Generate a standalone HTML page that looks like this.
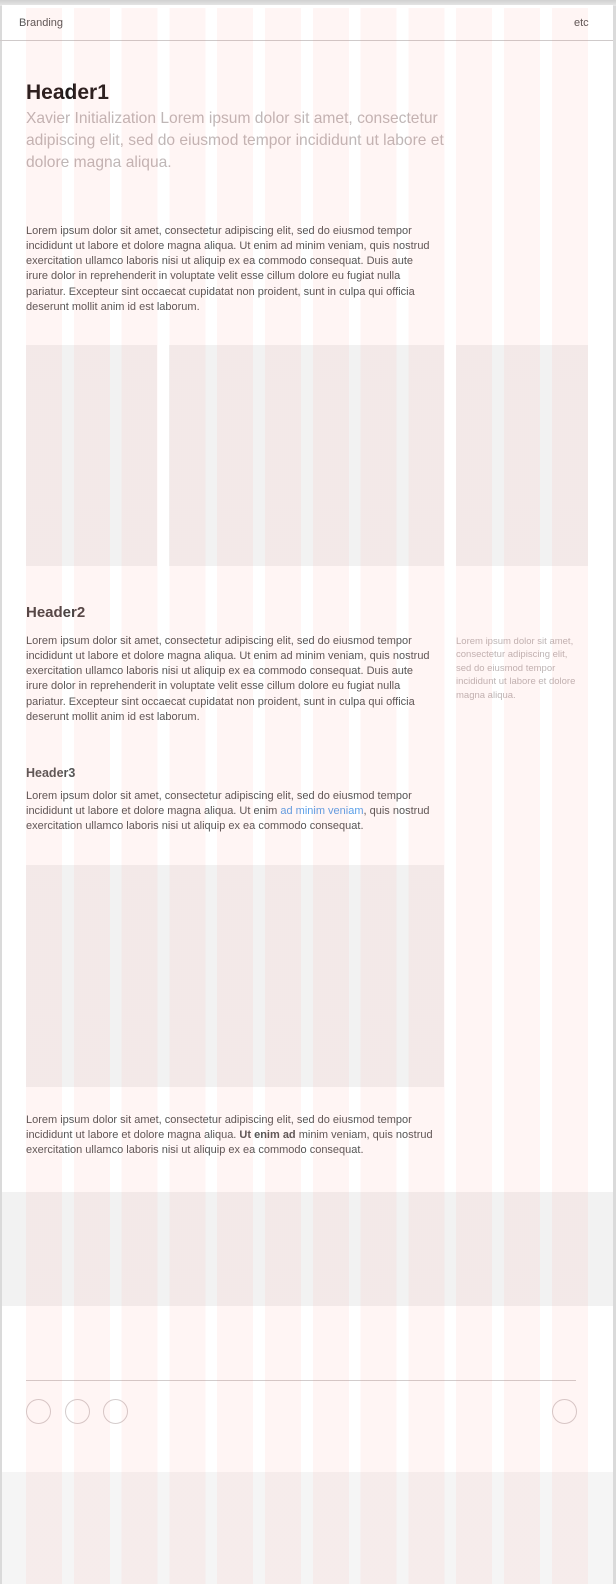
<!DOCTYPE html>
<html><head><meta charset="utf-8">
<style>
html,body{margin:0;padding:0}
body{width:616px;height:1584px;background:#dadada;position:relative;overflow:hidden;font-family:"Liberation Sans",sans-serif}
#page{position:absolute;left:2px;top:5px;width:611px;height:1579px;background:#fff}
.abs{position:absolute;white-space:nowrap}
#shadow{position:absolute;left:0;top:0;width:616px;height:6px;background:linear-gradient(#d0d0d0,#e8e8e8)}
.stripes{position:absolute;left:26px;top:8px;width:562px;height:1576px;pointer-events:none;z-index:5;
background:repeating-linear-gradient(90deg,rgba(255,110,100,0.07) 0,rgba(255,110,100,0.07) 36px,transparent 36px,transparent 47.8px)}
.body{font-size:11px;line-height:15.3px;color:#555;left:26px}
.blk{position:absolute;background:#f2f2f2}
.circ{position:absolute;width:23px;height:23px;border:1px solid #d4cccc;border-radius:50%;top:1399px}
</style></head><body>
<div id="shadow"></div>
<div id="page"></div>
<div class="abs" style="left:0;top:40px;width:613px;height:1px;background:#cfcaca"></div>
<div class="abs" style="left:19px;top:16px;font-size:11px;line-height:14px;color:#555">Branding</div>
<div class="abs" style="left:574px;top:16px;font-size:11px;line-height:14px;color:#555">etc</div>

<div class="abs" style="left:26px;top:80.7px;font-size:21px;line-height:24px;font-weight:bold;color:#1e1a1a">Header1</div>
<div class="abs" style="left:26px;top:108.3px;font-size:15.6px;line-height:22px;color:#bfb7b7">Xavier Initialization Lorem ipsum dolor sit amet, consectetur<br>adipiscing elit, sed do eiusmod tempor incididunt ut labore et<br>dolore magna aliqua.</div>

<div class="abs body" style="top:223.5px">Lorem ipsum dolor sit amet, consectetur adipiscing elit, sed do eiusmod tempor<br>incididunt ut labore et dolore magna aliqua. Ut enim ad minim veniam, quis nostrud<br>exercitation ullamco laboris nisi ut aliquip ex ea commodo consequat. Duis aute<br>irure dolor in reprehenderit in voluptate velit esse cillum dolore eu fugiat nulla<br>pariatur. Excepteur sint occaecat cupidatat non proident, sunt in culpa qui officia<br>deserunt mollit anim id est laborum.</div>

<div class="blk" style="left:26px;top:345px;width:131px;height:221px"></div>
<div class="blk" style="left:169px;top:345px;width:275px;height:221px"></div>
<div class="blk" style="left:456px;top:345px;width:132px;height:221px"></div>

<div class="abs" style="left:26px;top:603.8px;font-size:15px;line-height:18px;font-weight:bold;color:#4a4444">Header2</div>
<div class="abs body" style="top:633.5px">Lorem ipsum dolor sit amet, consectetur adipiscing elit, sed do eiusmod tempor<br>incididunt ut labore et dolore magna aliqua. Ut enim ad minim veniam, quis nostrud<br>exercitation ullamco laboris nisi ut aliquip ex ea commodo consequat. Duis aute<br>irure dolor in reprehenderit in voluptate velit esse cillum dolore eu fugiat nulla<br>pariatur. Excepteur sint occaecat cupidatat non proident, sunt in culpa qui officia<br>deserunt mollit anim id est laborum.</div>
<div class="abs" style="left:456px;top:634.5px;font-size:9.5px;line-height:13.5px;color:#bdb5b5">Lorem ipsum dolor sit amet,<br>consectetur adipiscing elit,<br>sed do eiusmod tempor<br>incididunt ut labore et dolore<br>magna aliqua.</div>

<div class="abs" style="left:26px;top:764.7px;font-size:12.5px;line-height:16px;font-weight:bold;color:#555">Header3</div>
<div class="abs body" style="top:788.5px">Lorem ipsum dolor sit amet, consectetur adipiscing elit, sed do eiusmod tempor<br>incididunt ut labore et dolore magna aliqua. Ut enim <span style="color:#5aa0e8">ad minim veniam</span>, quis nostrud<br>exercitation ullamco laboris nisi ut aliquip ex ea commodo consequat.</div>

<div class="blk" style="left:26px;top:865px;width:418px;height:222px"></div>

<div class="abs body" style="top:1112.5px">Lorem ipsum dolor sit amet, consectetur adipiscing elit, sed do eiusmod tempor<br>incididunt ut labore et dolore magna aliqua. <b>Ut enim ad</b> minim veniam, quis nostrud<br>exercitation ullamco laboris nisi ut aliquip ex ea commodo consequat.</div>

<div class="blk" style="left:2px;top:1192px;width:611px;height:114px"></div>

<div class="abs" style="left:26px;top:1380px;width:550px;height:1px;background:#d2cccc"></div>
<div class="circ" style="left:26px"></div>
<div class="circ" style="left:65px"></div>
<div class="circ" style="left:103px"></div>
<div class="circ" style="left:552px"></div>

<div class="blk" style="left:2px;top:1472px;width:611px;height:112px;background:#f5f5f5"></div>

<div class="stripes"></div>
</body></html>
